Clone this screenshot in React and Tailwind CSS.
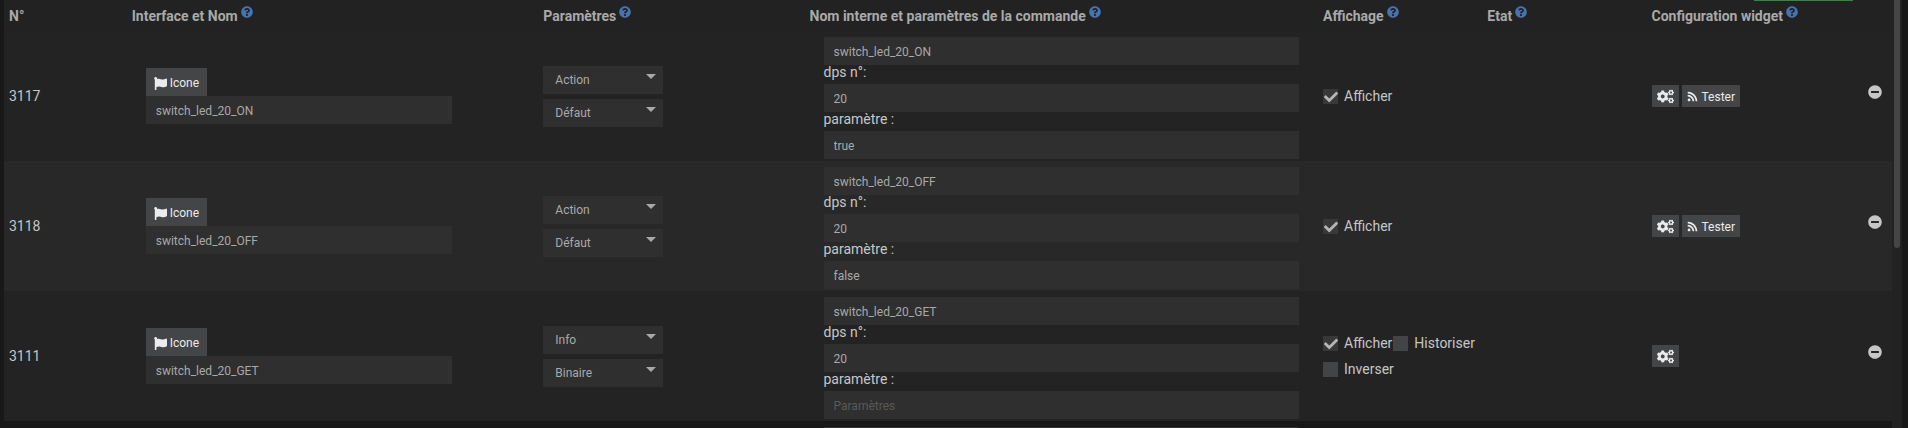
import React from 'react';
import { FaFlag, FaCogs, FaRss, FaQuestionCircle, FaMinusCircle, FaCheck } from 'react-icons/fa';

const commands = [
    { id: '3117', name: 'switch_led_20_ON', type: 'Action', subType: 'Défaut', dps: '20', param: 'true' },
    { id: '3118', name: 'switch_led_20_OFF', type: 'Action', subType: 'Défaut', dps: '20', param: 'false' },
    { id: '3111', name: 'switch_led_20_GET', type: 'Info', subType: 'Binaire', dps: '20', param: '' },
];

const TYPES = ['Action', 'Info'];
const SUB_TYPES = {
    Action: ['Défaut', 'Curseur', 'Message', 'Couleur', 'Liste'],
    Info: ['Binaire', 'Numérique', 'Autre'],
};

const HeaderCell = ({ children, help = true }) => (
    <th className="h-[31px] px-[5px] pt-[2px] pb-0 text-left font-bold whitespace-nowrap align-middle">
        <span className="flex items-center gap-[3px]">
            {children}
            {help && <FaQuestionCircle className="mb-[9px] size-3 text-[#4674b0]" />}
        </span>
    </th>
);

const TextField = ({ className = '', ...props }) => (
    <input
        type="text"
        className={`block h-7 bg-[#2f2f2f] px-[10px] pt-[2px] text-[12px] text-[#a9a9a9] outline-none placeholder:text-[#595959] ${className}`}
        {...props}
    />
);

const SelectField = ({ label, value, options }) => (
    <div className="grid w-[120px]">
        <select
            aria-label={label}
            defaultValue={value}
            className="col-start-1 row-start-1 h-7 w-full appearance-none bg-[#2f2f2f] px-3 text-[12px] text-[#a9a9a9] outline-none"
        >
            {options.map((o) => <option key={o}>{o}</option>)}
        </select>
        <svg viewBox="0 0 10 5" className="pointer-events-none col-start-1 row-start-1 mt-2 mr-[7px] h-[5px] w-[10px] self-start justify-self-end fill-[#a9a9a9]">
            <path d="M0 0h10L5 5z" />
        </svg>
    </div>
);

const CheckField = ({ label, checked = false }) => (
    <label className="mr-px flex h-[26px] items-center gap-[6px] whitespace-nowrap">
        <span className="grid place-items-center">
            <input
                type="checkbox"
                defaultChecked={checked}
                className="peer col-start-1 row-start-1 size-[15px] appearance-none bg-[#434446] checked:bg-[#383838]"
            />
            <FaCheck className="pointer-events-none invisible col-start-1 row-start-1 size-[14px] self-end text-[#b5b5b5] peer-checked:visible" />
        </span>
        {label}
    </label>
);

const SmallButton = ({ children, ...props }) => (
    <button type="button" className="flex h-[22px] items-center gap-1 bg-[#444547] px-[5px] pt-px text-[12px] text-[#ebebeb]" {...props}>
        {children}
    </button>
);

const CommandRow = ({ cmd }) => {
    const isInfo = cmd.type === 'Info';

    return (
        <tr className="h-[130px] bg-[#232323] even:bg-[#282828]">
            <td className="px-[5px]">{cmd.id}</td>
            <td className="pr-[86px] pl-[19px]">
                <button type="button" className="flex h-7 items-center gap-[3px] bg-[#444547] px-2 pt-[2px] text-[12px] text-[#ebebeb]">
                    <FaFlag className="size-[13px]" />
                    Icone
                </button>
                <TextField aria-label="Nom" defaultValue={cmd.name} className="w-full" />
            </td>
            <td className="px-[5px]">
                <div className="flex flex-col gap-[5px]">
                    <SelectField label="Type" value={cmd.type} options={TYPES} />
                    <SelectField label="Sous-type" value={cmd.subType} options={SUB_TYPES[cmd.type]} />
                </div>
            </td>
            <td className="pt-1 pr-[19px] pl-[19px]">
                <TextField aria-label="Nom interne" defaultValue={cmd.name} className="w-full" />
                <label htmlFor={`dps-${cmd.id}`} className="block h-[19px] leading-[15px]">dps n°:</label>
                <TextField id={`dps-${cmd.id}`} defaultValue={cmd.dps} className="w-full" />
                <label htmlFor={`param-${cmd.id}`} className="block h-[19px] leading-[15px]">paramètre :</label>
                <TextField id={`param-${cmd.id}`} defaultValue={cmd.param} placeholder="Paramètres" className="w-full" />
            </td>
            <td className="px-[5px]">
                <div className="flex flex-wrap">
                    <CheckField label="Afficher" checked />
                    {isInfo && <CheckField label="Historiser" />}
                    {isInfo && <CheckField label="Inverser" />}
                </div>
            </td>
            <td />
            <td className="px-[5px]">
                <div className="flex gap-[3px]">
                    <SmallButton aria-label="Configuration">
                        <FaCogs className="size-[17px]" />
                    </SmallButton>
                    {!isInfo && (
                        <SmallButton>
                            <FaRss className="size-[11px]" />
                            Tester
                        </SmallButton>
                    )}
                </div>
            </td>
            <td className="pr-[10px] pb-2">
                <button type="button" aria-label="Supprimer" className="ml-auto block">
                    <FaMinusCircle className="size-[14px] text-[#c6c6c6]" />
                </button>
            </td>
        </tr>
    );
};

export default function App() {
    return (
        <div className="relative flex h-screen overflow-hidden bg-[#181818] pr-[6px] pl-1 font-[Roboto,sans-serif] text-[14px] text-[#c6c6c6]">
            {/* Bottom edge of the save button that hangs over the table */}
            <div className="absolute top-0 right-[55px] h-px w-[99px] bg-[#2f8a3c]" />

            <div className="min-w-0 flex-1">
                <table className="w-full table-fixed border-collapse">
                    <colgroup>
                        <col className="w-[6.5%]" />
                        <col className="w-[21.8%]" />
                        <col className="w-[14.1%]" />
                        <col className="w-[27.2%]" />
                        <col className="w-[8.7%]" />
                        <col className="w-[8.7%]" />
                        <col className="w-[10.9%]" />
                        <col />
                    </colgroup>
                    <thead className="bg-[#222222] text-[#a9a9a9]">
                        <tr>
                            <HeaderCell help={false}>N°</HeaderCell>
                            <HeaderCell>Interface et Nom</HeaderCell>
                            <HeaderCell>Paramètres</HeaderCell>
                            <HeaderCell>Nom interne et paramètres de la commande</HeaderCell>
                            <HeaderCell>Affichage</HeaderCell>
                            <HeaderCell>Etat</HeaderCell>
                            <HeaderCell>Configuration widget</HeaderCell>
                            <td />
                        </tr>
                    </thead>
                    <tbody>
                        {commands.map((cmd) => <CommandRow key={cmd.id} cmd={cmd} />)}
                        {/* Next row, mostly below the fold */}
                        <tr>
                            <td colSpan={3} />
                            <td className="pt-[6px] pr-[19px] pl-[19px]">
                                <TextField aria-label="Nom interne" className="w-full" />
                            </td>
                            <td colSpan={4} />
                        </tr>
                    </tbody>
                </table>
            </div>
            {/* Scroll track and thumb */}
            <div className="w-[10px] bg-[#222222] pl-[2px]">
                <div className="h-[58%] w-[6px] rounded-b-sm bg-[#444547]" />
            </div>
        </div>
    );
}
